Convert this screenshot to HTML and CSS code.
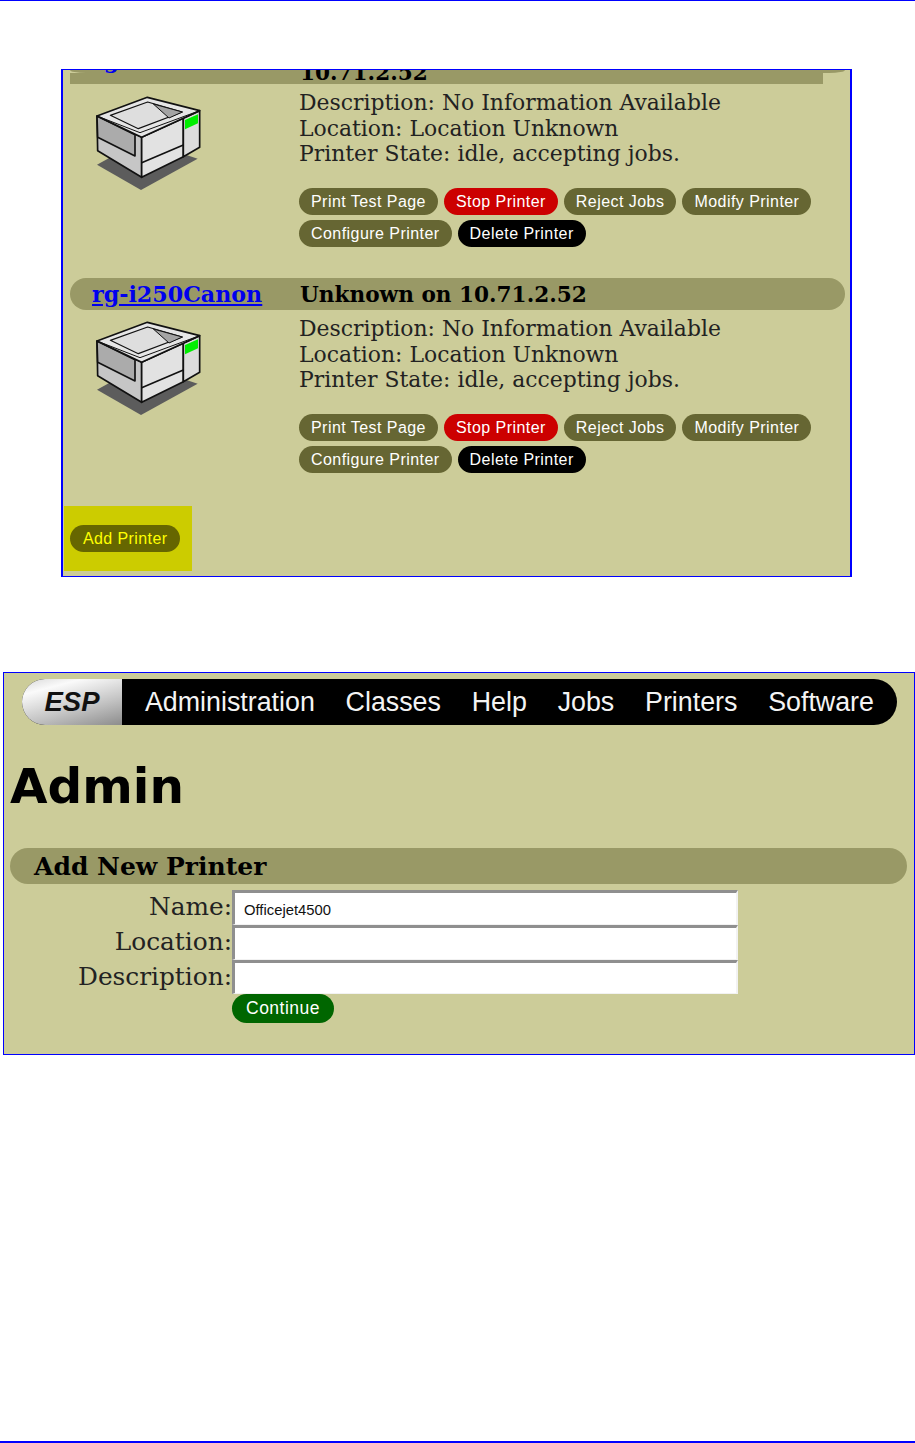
FILE: index.html
```html
<!DOCTYPE html>
<html lang="en">
<head>
  <meta charset="UTF-8">
  <meta name="viewport" content="width=device-width, initial-scale=1.0">
  <title>Add New Printer</title>
  <link rel="stylesheet" href="styles.css">
</head>
<body>
  <svg class="defs" xmlns="http://www.w3.org/2000/svg">
    <symbol id="printer" viewBox="0 0 375 315">
      <polygon points="36,224 168,300 338,206 170,150" fill="#5c5c5c"/>
      <g stroke="#111" stroke-width="5" stroke-linejoin="round">
        <polygon points="36,78 170,142 170,262 38,182" fill="#c6c6c6"/>
        <polygon points="36,78 150,134 150,198 38,142" fill="#ababab"/>
        <polygon points="170,142 295,85 295,200 170,262" fill="#e2e2e2"/>
        <polygon points="295,85 344,62 344,172 295,200" fill="#dcdcdc"/>
        <polygon points="36,78 187,22 344,62 170,142" fill="#e6e6e6"/>
        <polyline points="36,78 165,128 344,62" fill="none" stroke-width="3"/>
        <polygon points="76,76 188,36 292,66 160,116" fill="#dedede" stroke-width="3.5"/>
        <polygon points="205,42 292,66 252,84" fill="#a4a4a4" stroke-width="3"/>
      </g>
      <polygon points="300,90 339,73 339,100 300,118" fill="#00ee00"/>
      <path d="M170 218 L295 165" stroke="#111" stroke-width="5" fill="none"/>
    </symbol>
  </svg>

  <div class="rule-top"></div>

  <section class="panel panel-printers">
    <div class="head-tail"></div>
    <div class="head-clip">
      <a class="printer-link clip-link" href="#">rg-i250</a>
      <span class="clip-title">10.71.2.52</span>
    </div>
    <div class="printer-body">
      <svg class="printer-icon"><use href="#printer"/></svg>
      <div>
        <p class="info">Description: No Information Available<br>Location: Location Unknown<br>Printer State: idle, accepting jobs.</p>
        <div class="actions">
          <a class="btn" href="#">Print Test Page</a>
          <a class="btn btn-red" href="#">Stop Printer</a>
          <a class="btn" href="#">Reject Jobs</a>
          <a class="btn" href="#">Modify Printer</a>
          <a class="btn" href="#">Configure Printer</a>
          <a class="btn btn-black" href="#">Delete Printer</a>
        </div>
      </div>
    </div>

    <h2 class="bar printer-bar">
      <a class="printer-link" href="#">rg-i250Canon</a>
      <span>Unknown on 10.71.2.52</span>
    </h2>
    <div class="printer-body">
      <svg class="printer-icon"><use href="#printer"/></svg>
      <div>
        <p class="info">Description: No Information Available<br>Location: Location Unknown<br>Printer State: idle, accepting jobs.</p>
        <div class="actions">
          <a class="btn" href="#">Print Test Page</a>
          <a class="btn btn-red" href="#">Stop Printer</a>
          <a class="btn" href="#">Reject Jobs</a>
          <a class="btn" href="#">Modify Printer</a>
          <a class="btn" href="#">Configure Printer</a>
          <a class="btn btn-black" href="#">Delete Printer</a>
        </div>
      </div>
    </div>

    <div class="highlight">
      <a class="btn btn-add" href="#">Add Printer</a>
    </div>
  </section>

  <section class="panel panel-admin">
    <nav class="nav">
      <span class="nav-logo">ESP</span>
      <a href="#">Administration</a>
      <a href="#">Classes</a>
      <a href="#">Help</a>
      <a href="#">Jobs</a>
      <a href="#">Printers</a>
      <a href="#">Software</a>
    </nav>

    <h1>Admin</h1>

    <h2 class="bar add-bar">Add New Printer</h2>

    <form class="add-form">
      <label for="name">Name:</label>
      <input id="name" type="text" value="Officejet4500">
      <label for="location">Location:</label>
      <input id="location" type="text">
      <label for="description">Description:</label>
      <input class="input-last" id="description" type="text">
      <button class="btn btn-green" type="button">Continue</button>
    </form>
  </section>

  <div class="rule-bottom"></div>
</body>
</html>
```

FILE: styles.css
```css
* {
  margin: 0;
  padding: 0;
  box-sizing: border-box;
}

html, body {
  height: 100%;
}

body {
  display: flex;
  flex-direction: column;
  background: #fff;
  color: #222;
  font-family: "DejaVu Serif", serif;
  overflow: hidden;
}

.defs {
  display: none;
}

.rule-top {
  height: 1px;
  background: #0000ff;
}

.rule-bottom {
  height: 2px;
  margin-top: auto;
  background: #0000ff;
}

.panel {
  background: #cccc99;
  border: 1px solid #0000ff;
  overflow: hidden;
}

.panel-printers {
  width: 791px;
  height: 508px;
  margin: 68px 0 0 61px;
  border-left-width: 2px;
  border-right-width: 2px;
}

.panel-admin {
  width: 912px;
  height: 383px;
  margin: 95px 0 0 3px;
  padding: 6px 6px 0;
}

.printer-link {
  color: #0000ee;
  text-decoration: underline;
}

/* first printer is cut off at the top of the shot */
.head-tail {
  width: 775px;
  height: 3px;
  margin-left: 7px;
  background: #999966;
  border-radius: 0 0 16px 16px / 0 0 3px 3px;
}

.head-clip {
  display: flex;
  width: 753px;
  height: 11px;
  margin-left: 7px;
  background: #999966;
  color: #000;
  font-size: 21.6px;
  font-weight: bold;
  line-height: 32px;
}

.clip-link {
  width: 230px;
  margin-top: -29px;
  padding-left: 22px;
  font-size: 22.2px;
  text-decoration: none;
}

.clip-title {
  margin-top: -16px;
}

.bar {
  background: #999966;
  color: #000;
  font-weight: bold;
}

.printer-bar {
  display: flex;
  width: 775px;
  height: 32px;
  margin-left: 7px;
  border-radius: 16px;
  font-size: 21.6px;
  line-height: 32px;
}

.printer-bar .printer-link {
  width: 230px;
  padding-left: 22px;
  font-size: 22.2px;
}

.printer-bar span {
  padding-top: 1px;
}

.printer-body {
  display: flex;
  height: 194px;
  padding-left: 22px;
}

.printer-icon {
  flex: none;
  width: 125px;
  height: 105px;
  margin-top: 6px;
  margin-right: 89px;
}

.printer-bar + .printer-body .printer-icon {
  margin-top: 5px;
}

.info {
  margin-top: 6px;
  font-size: 21.9px;
  line-height: 25.5px;
}

.actions {
  display: flex;
  flex-wrap: wrap;
  gap: 5px 6px;
  width: 530px;
  margin-top: 21px;
}

.btn {
  display: inline-block;
  height: 27px;
  padding: 0 12px;
  border: none;
  border-radius: 14px;
  background: #666633;
  color: #fff;
  font-family: "Liberation Sans", Arial, sans-serif;
  font-size: 16px;
  line-height: 27px;
  letter-spacing: 0.45px;
  text-decoration: none;
}

.btn-red {
  background: #cc0000;
}

.btn-black {
  background: #000;
}

.highlight {
  width: 128px;
  height: 65px;
  margin: 2px 0 0 1px;
  padding: 19px 0 0 6px;
  background: #cccc00;
}

.btn-add {
  padding: 0 13px;
  background: #666600;
  color: #ffff00;
  letter-spacing: 0.4px;
}

.nav {
  display: flex;
  align-items: center;
  width: 875px;
  height: 46px;
  margin-left: 12px;
  background: #000;
  border-radius: 23px;
  overflow: hidden;
  font-family: "Liberation Sans", Arial, sans-serif;
  font-size: 26.8px;
}

.nav a {
  margin-right: 30.8px;
  color: #f4f4f4;
  text-decoration: none;
}

.nav-logo {
  flex: none;
  display: flex;
  align-items: center;
  justify-content: center;
  width: 100px;
  height: 46px;
  margin-right: 23px;
  background: linear-gradient(165deg, #d8d8d8, #fafafa 22%, #c4c4c4 62%, #8c8c8c 100%);
  color: #111;
  font-size: 27.5px;
  font-style: italic;
  font-weight: bold;
}

h1 {
  margin-top: 31px;
  color: #000;
  font-family: "DejaVu Sans", sans-serif;
  font-size: 48.5px;
  font-weight: bold;
  line-height: 60px;
}

.add-bar {
  width: 897px;
  height: 36px;
  margin-top: 32px;
  padding-left: 24px;
  border-radius: 18px;
  font-size: 25px;
  line-height: 38px;
}

.add-form {
  display: grid;
  grid-template-columns: 222px 506px;
  margin-top: 6px;
  font-size: 24.8px;
}

.add-form label {
  text-align: right;
  line-height: 33px;
}

.add-form input {
  height: 35px;
  padding: 2px 8px 0 9px;
  border-style: solid;
  border-width: 3px 2px 1px 3px;
  border-color: #8f8f8f #f2f2f2 #f2f2f2 #8f8f8f;
  background: #fff;
  color: #111;
  font-family: "Liberation Sans", Arial, sans-serif;
  font-size: 14.8px;
}

.add-form .input-last {
  height: 34px;
}

.btn-green {
  grid-column: 2;
  justify-self: start;
  height: 29px;
  padding: 0 14px;
  background: #006600;
  border-radius: 15px;
  font-size: 17.5px;
  line-height: 29px;
  letter-spacing: 0.5px;
}
```
